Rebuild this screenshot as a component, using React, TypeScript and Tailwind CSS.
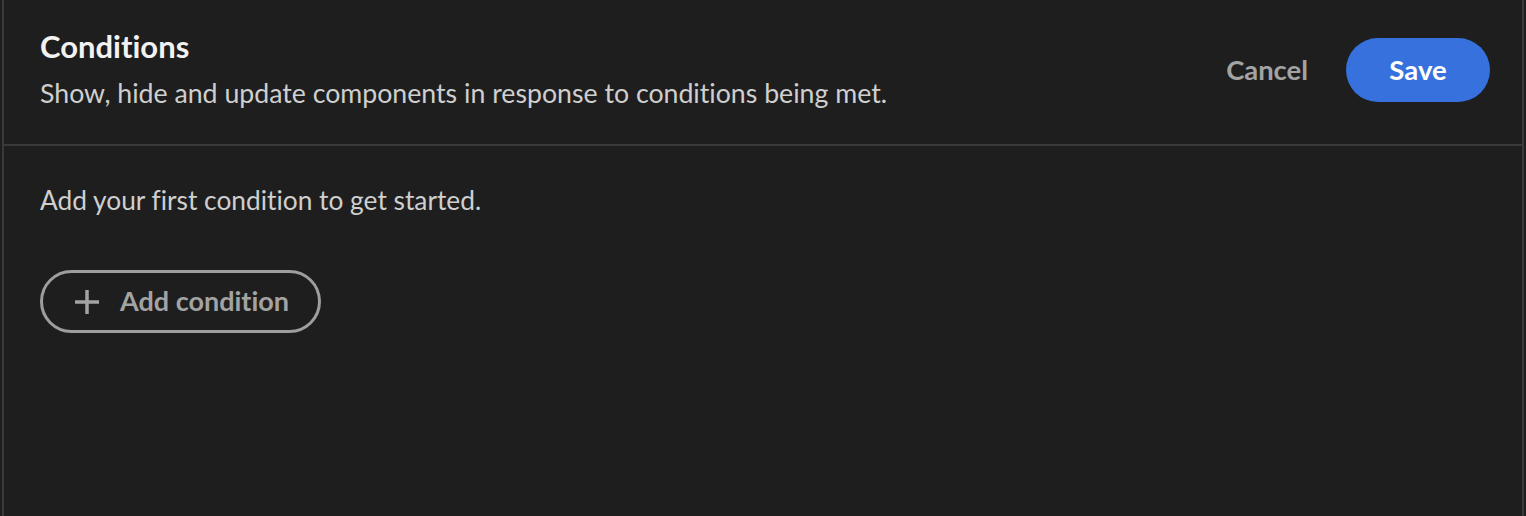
import React from "react";

export default function App() {
  return (
    <div
      className="w-full h-[516px] bg-[#1e1e1e] px-[2px] [font-variant-ligatures:none]"
      style={{ fontFamily: "Lato, 'Noto Sans', sans-serif" }}
    >
      <div className="h-full border-x-2 border-[#3a3a3a] flex flex-col">
        <div className="h-[146px] shrink-0 flex items-center justify-between pl-[36px] pr-[32px] pb-[4px] border-b-2 border-[#3a3a3a]">
          <div className="flex flex-col">
            <div className="text-[31px] leading-[36px] font-bold text-[#f2f2f2]">Conditions</div>
            <div className="text-[26.7px] leading-[38px] text-[#cfcfcf] mt-[10px]">
              Show, hide and update components in response to conditions being met.
            </div>
          </div>
          <div className="flex items-center gap-[38px]">
            <button className="text-[27.4px] font-bold text-[#a3a3a3]">Cancel</button>
            <button className="w-[144px] h-[64px] rounded-full bg-[#3671dd] text-white text-[27.5px] font-bold">
              Save
            </button>
          </div>
        </div>
        <div className="pl-[36px] pt-[38px]">
          <div className="text-[26.3px] leading-[32px] text-[#cfcfcf]">
            Add your first condition to get started.
          </div>
          <button className="mt-[54px] h-[63px] w-[281px] rounded-full border-[3px] border-[#9e9e9e] flex items-center pl-[31px] gap-[20px]">
            <svg width="26" height="26" viewBox="0 0 26 26">
              <path d="M13 1 V25 M1 13 H25" stroke="#a3a3a3" strokeWidth="3.5" fill="none" />
            </svg>
            <span className="text-[27px] font-bold text-[#a3a3a3]">Add condition</span>
          </button>
        </div>
      </div>
    </div>
  );
}
